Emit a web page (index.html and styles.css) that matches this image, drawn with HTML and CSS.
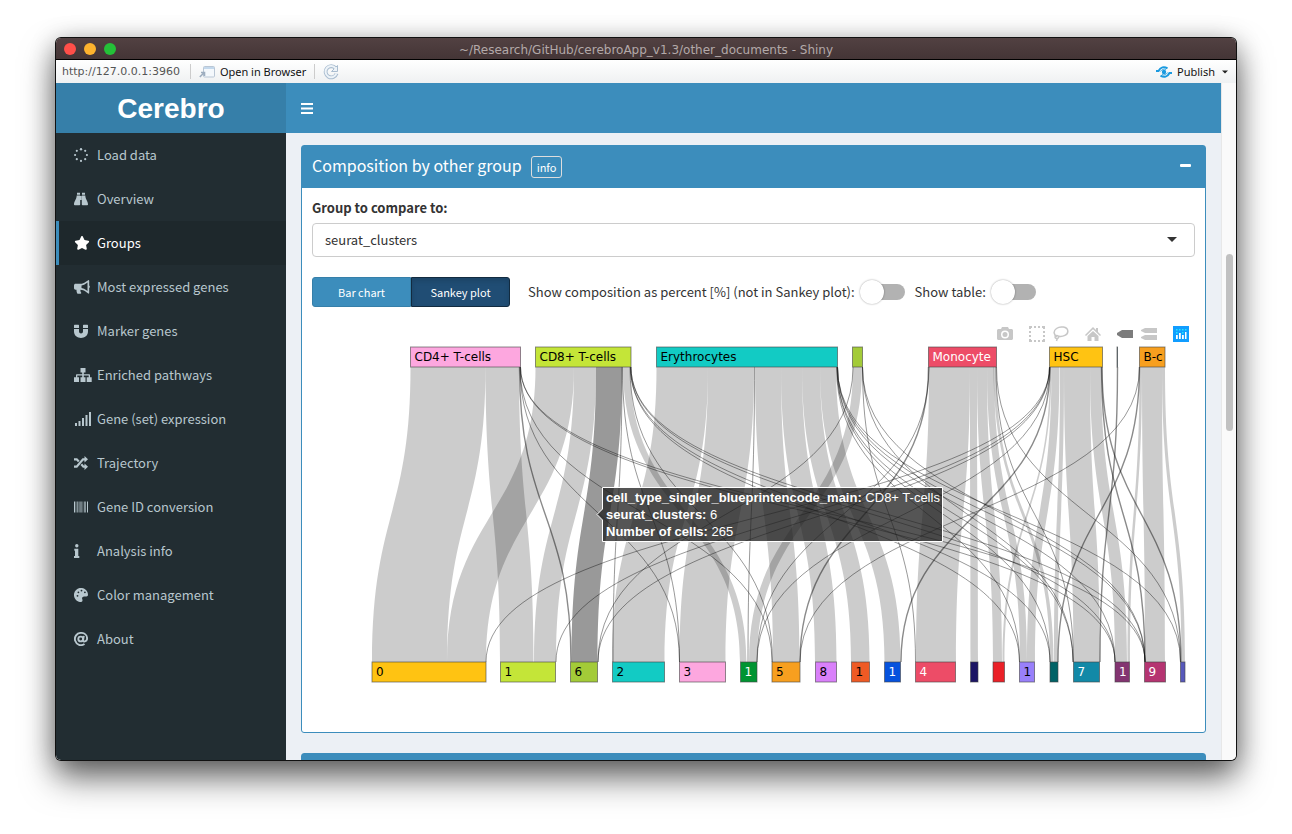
FILE: index.html
```html
<!DOCTYPE html>
<html lang="en">
<head>
<meta charset="utf-8">
<title>Cerebro</title>
<link rel="stylesheet" href="styles.css">
</head>
<body>
<div class="window">
  <div class="titlebar">
    <div class="lights"><span class="light red"></span><span class="light amber"></span><span class="light green"></span></div>
    <div class="window-title">~/Research/GitHub/cerebroApp_v1.3/other_documents - Shiny</div>
    <div></div>
  </div>
  <div class="toolbar">
    <span class="url">http://127.0.0.1:3960</span>
    <span class="sep"></span>
    <button class="tool open" type="button">
      <svg width="16" height="12" viewBox="0 0 16 12"><rect x="4.500" y=".5" width="11" height="10.500" rx="1" fill="#f4f8fc" stroke="#b9c6d5"/><path d="M5 1h10v2H5z" fill="#c3d8ec"/><path d="M.8 11 4.500 7.300M2 6.500h3.500V10" fill="none" stroke="#9dadbf" stroke-width="1.600"/></svg>
      Open in Browser</button>
    <span class="sep"></span>
    <button class="tool" type="button" aria-label="Reload">
      <svg width="16" height="16" viewBox="0 0 16 16"><path d="M12.600 4.300A5.600 5.600 0 1 0 13.600 9.500" fill="none" stroke="#a9bccf" stroke-width="3.800"/><path d="M14.500 1.500v6h-6z" fill="#edf3f8" stroke="#a9bccf"/><path d="M12.600 4.300A5.600 5.600 0 1 0 13.500 9.300" fill="none" stroke="#edf3f8" stroke-width="2"/></svg>
    </button>
    <button class="tool publish" type="button">
      <svg width="16" height="12" viewBox="0 0 16 12" fill="none" stroke="#1a9ae0" stroke-width="2"><circle cx="8" cy="6" r="2.200" fill="#1a9ae0" stroke="none"/><path d="M0 5h2.500C4.500 1 8 .2 11.500 2.300M16 7h-2.500c-2 4-5.500 4.800-9 2.700"/><path d="M4.500 5.500C5.500 3.500 8 2.500 10 3.500M11.500 6.500c-1 2-3.500 3-5.500 2" stroke-width=".8"/></svg>
      Publish
      <svg width="6" height="4" viewBox="0 0 6 4"><path d="M0 .5h6L3 3.500z" fill="#222"/></svg>
    </button>
  </div>
  <div class="viewport">
    <div class="app">
      <aside class="sidebar">
        <a class="logo" href="#">Cerebro</a>
        <nav class="menu">
          <a href="#"><svg viewBox="0 0 14 14"><circle cx="7" cy="1.200" r="1.200"/><circle cx="11.200" cy="2.800" r="1.100"/><circle cx="12.900" cy="7" r="1.100"/><circle cx="11.200" cy="11.200" r="1.100"/><circle cx="7" cy="12.900" r="1.100"/><circle cx="2.800" cy="11.200" r="1.100"/><circle cx="1.100" cy="7" r="1.100"/><circle cx="2.800" cy="2.800" r="1.100"/></svg>Load data</a>
          <a href="#"><svg viewBox="0 0 14 14"><path d="M3 .8h3v2H3zM8 .8h3v2H8zM2.700 3.400h3.500V12.500a.8.800 0 0 1-.8.800H.8a.8.800 0 0 1-.8-.8C0 9 2.500 7.500 2.700 3.400zM11.300 3.400H7.800v9.100c0 .4.400.8.800.8h4.600a.8.800 0 0 0 .8-.8c0-3.500-2.500-5-2.700-9.100zM6 4h2v4H6z"/></svg>Overview</a>
          <a class="active" href="#"><svg class="big" viewBox="0 0 16 14"><path d="M7.200.5c.3-.6 1.300-.6 1.600 0l1.700 3.600 3.900.6c.7.100 1 .9.500 1.500l-2.800 2.700.7 3.900c.1.700-.6 1.200-1.300.9L8 11.900l-3.500 1.800c-.7.300-1.400-.2-1.300-.9l.7-3.900L1.100 6.200c-.5-.6-.2-1.400.5-1.500l3.900-.6z"/></svg>Groups</a>
          <a href="#"><svg class="big" viewBox="0 0 16 14"><path fill-rule="evenodd" d="M15.200 5.500V.8c0-.6-.6-.9-1-.6L11.500 2C10 3.200 8.400 3.800 6.500 3.800H1.600C.7 3.800 0 4.500 0 5.400v2.700c0 .9.700 1.600 1.600 1.600h.9c-.1 1.400.2 2.600.8 3.700.1.300.4.400.7.400h2.500c.7 0 1-.7.600-1.200-.5-.7-.8-1.800-.6-2.900 1.900 0 3.600.7 5 1.800l2.700 2.100c.4.300 1 0 1-.6V8c.9-.5.900-2 0-2.500zM13.500 11 12.400 10.200A9.800 9.800 0 0 0 7.500 8V5.500a9.800 9.800 0 0 0 4.900-2.200l1.100-.8z"/></svg>Most expressed genes</a>
          <a href="#"><svg viewBox="0 0 14 14"><path d="M0 5h5v2.500c0 2.600 4 2.600 4 0V5h5v2.500C14 16 0 16 0 7.500zM.6.800h3.800c.4 0 .6.300.6.600V4H0V1.400C0 1.100.2.800.6.800zM9.600.8h3.800c.4 0 .6.300.6.600V4H9V1.400c0-.3.200-.6.600-.6z"/></svg>Marker genes</a>
          <a href="#"><svg class="wide" viewBox="0 0 18 14"><path d="M6.500 0h5v4.500h-1.700v1.800H15c.6 0 1 .4 1 1v1.900h1.700V14h-5V9.200h2V7.600H9.800v1.600h1.700V14h-5V9.200h1.700V7.600H3.300v1.600H5V14H0V9.200h2V7.300c0-.6.400-1 1-1h5.200V4.500H6.500z"/></svg>Enriched pathways</a>
          <a href="#"><svg class="wide" viewBox="0 0 18 14"><path d="M1 11h2v3H1zM4.500 9h2v5h-2zM8 6h2v8H8zM11.500 3h2v11h-2zM15 0h2v14h-2z"/></svg>Gene (set) expression</a>
          <a href="#"><svg viewBox="0 0 14 14"><path d="M0 3.300h2.700L4.800 5.600M0 10.700h2.700L9 3.300h3M7.300 8.300 9.400 10.700h2.600" fill="none" stroke="currentColor" stroke-width="2.200"/><path d="M10.500 0 14 3.300 10.500 6.600zM10.500 7.400l3.500 3.300-3.500 3.300z"/></svg>Trajectory</a>
          <a href="#"><svg viewBox="0 0 14 14"><path d="M0 1.500h1v11H0zM13 1.500h1v11h-1z"/><path opacity=".65" d="M1.500 1.500h1v11h-1zM3 1.500h1.500v11H3zM5 1.500h.7v11H5zM6.200 1.500h1.600v11H6.200zM8.500 1.500h.8v11h-.8zM10 1.500h2v11h-2z"/></svg>Gene ID conversion</a>
          <a href="#"><svg viewBox="0 0 14 14"><circle cx="2.800" cy="1.700" r="1.700"/><path d="M.3 4.800h4v7.200h1v2H0v-2h1V6.800H.3z"/></svg>Analysis info</a>
          <a href="#"><svg viewBox="0 0 14 14"><path fill-rule="evenodd" d="M5.600.1C2.900.7.700 2.900.1 5.600-.9 10.500 3.400 14.500 7.100 14c1.200-.2 1.800-1.600 1.200-2.700-.7-1.300.3-2.900 1.800-2.900h2.300c.9 0 1.600-.8 1.600-1.700C14 2.500 10.100-.8 5.600.1zM3.500 8.700a.9.900 0 1 1 0-1.800.9.900 0 0 1 0 1.800zM4.400 5.200a.9.900 0 1 1 0-1.800.9.900 0 0 1 0 1.800zM7.500 3.500a.9.900 0 1 1 0-1.800.9.900 0 0 1 0 1.800zM10.900 5.200a.9.900 0 1 1 0-1.800.9.900 0 0 1 0 1.800z"/></svg>Color management</a>
          <a href="#"><svg viewBox="0 0 14 14"><g fill="none" stroke="currentColor" stroke-width="1.900"><circle cx="6.700" cy="7" r="2.400"/><path d="M9.800 3.800 9 8.500c-.2 1.600 4.100 1.400 4.100-2C13.100 3.200 10.400.9 7 .9A6.100 6.100 0 1 0 10.500 12"/></g></svg>About</a>
        </nav>
      </aside>
      <div class="main">
        <header class="navbar"><button class="burger" type="button" aria-label="Toggle navigation"><svg width="12" height="11" viewBox="0 0 12 11"><path d="M0 0h12v2H0zM0 4.500h12v2H0zM0 9h12v2H0z" fill="#fff"/></svg></button></header>
        <main class="content">
          <section class="box">
            <header class="box-header">
              <h3>Composition by other group</h3>
              <button class="info" type="button">info</button>
              <button class="collapse" type="button" aria-label="Collapse"><svg width="11" height="3" viewBox="0 0 11 3"><rect width="11" height="3" rx="1" fill="#fff"/></svg></button>
            </header>
            <div class="box-body">
              <label class="field-label" for="group">Group to compare to:</label>
              <div class="select-wrap">
                <select id="group"><option>seurat_clusters</option></select>
                <svg class="caret" width="10" height="5" viewBox="0 0 10 5"><path d="M0 0h10L5 5z" fill="#333"/></svg>
              </div>
              <div class="controls">
                <div class="btn-group"><button type="button">Bar chart</button><button class="on" type="button">Sankey plot</button></div>
                <label class="switch" for="percent">Show composition as percent [%] (not in Sankey plot):<input id="percent" type="checkbox"></label>
                <label class="switch" for="table">Show table:<input id="table" type="checkbox"></label>
              </div>
              <div class="plot">
                <svg class="sankey" id="sankey" viewBox="312 322 883 400" role="img" aria-label="Sankey plot of cell types and clusters"></svg>
                <div class="modebar">
                  <svg width="16" height="16" viewBox="0 0 16 16"><path fill-rule="evenodd" d="M1.500 3H4l1-2h6l1 2h2.500c.8 0 1.500.7 1.500 1.500v8c0 .8-.7 1.500-1.500 1.500h-13C.7 14 0 13.300 0 12.500v-8C0 3.700.7 3 1.500 3zM8 4.500a4 4 0 1 0 0 8 4 4 0 0 0 0-8zM8 6a2.500 2.500 0 1 1 0 5 2.500 2.500 0 0 1 0-5z"/></svg>
                  <svg class="gap" width="16" height="16" viewBox="0 0 16 16"><path d="M0 0h3v2H2v1H0zM5 0h2v2H5zM9 0h2v2H9zM13 0h3v3h-2V2h-1zM0 5h2v2H0zM0 9h2v2H0zM14 5h2v2h-2zM14 9h2v2h-2zM0 13h2v1h1v2H0zM5 14h2v2H5zM9 14h2v2H9zM14 13h2v3h-3v-2h1z"/></svg>
                  <svg width="16" height="16" viewBox="0 0 16 16"><path d="M4 10.500C.5 9 0 5 3.500 2.500 7-.2 14.500.5 14.800 5c.3 4-5 6-9 5.300M5 12.300c-2.500 1-4-1.600-2-2.600 1.500-.7 3 .5 2.500 1.700-.4 1.100-1.500 1-2 3.600" fill="none" stroke="currentColor" stroke-width="1.500"/></svg>
                  <svg class="gap" width="16" height="16" viewBox="0 0 16 16"><path d="m8 1 3 3V2h2v4l3 3-1 1-7-6.700L1 10 0 9zM8 5l5.500 5v5H9.500v-4h-3v4h-4v-5z"/></svg>
                  <svg class="gap picked" width="16" height="16" viewBox="0 0 16 16"><path d="M5 4h11v8H5L0 9V7z"/></svg>
                  <svg width="16" height="16" viewBox="0 0 16 16"><path d="M4 2h12v5H4L0 5V4zM4 9h12v5H4L0 12v-1z"/></svg>
                  <svg class="gap" width="16" height="16" viewBox="0 0 16 16"><path d="M0 0h16v16H0z" fill="#119dff"/><path d="M3 9h1.800v4H3zM6 7h1.800v6H6zM9 9h1.800v4H9zM12 6h1.500v7H12z" fill="#fff"/><path d="M3 3h1.500v1.500H3zM6 3h1.500v1.500H6zM9 3h1.500v1.500H9zM12 3h1.500v1.500H12zM3 6h1.500v1.500H3zM9 6h1.500v1.500H9z" fill="#25fefd" opacity=".8"/></svg>
                </div>
              </div>
            </div>
          </section>
          <section class="box next"><header class="box-header"></header></section>
        </main>
      </div>
    </div>
    <div class="scrollbar"><div class="thumb"></div></div>
  </div>
</div>
<script src="sankey.js"></script>
</body>
</html>
```
FILE: styles.css
```css
* { box-sizing: border-box; }
body {
  margin: 0;
  height: 100vh;
  padding: 38px 56px 74px;
  background: #fff;
  color: #333;
  font: 13px/20px "Noto Sans CJK SC", "Noto Sans", sans-serif;
}
button { font: inherit; color: inherit; border: 0; background: none; padding: 0; }
a { color: inherit; text-decoration: none; }
svg { flex: none; }
.window {
  height: 100%;
  display: flex;
  flex-direction: column;
  overflow: hidden;
  border-radius: 5px;
  box-shadow: 0 0 0 1px #111, 0 18px 34px rgba(0, 0, 0, .55), 0 4px 26px rgba(0, 0, 0, .3);
}
.titlebar {
  flex: none;
  height: 22px;
  padding: 0 8px;
  display: grid;
  grid-template-columns: 1fr auto 1fr;
  align-items: center;
  background: linear-gradient(#524142, #443536);
  border-bottom: 1px solid #000;
  color: #b3a9a9;
  font: 12px/20px "DejaVu Sans", sans-serif;
}
.window-title { padding-top: 2px; }
.lights { display: flex; gap: 8px; }
.light { width: 12px; height: 12px; border-radius: 50%; }
.red { background: #ff4f49; }
.amber { background: #fdb32e; }
.green { background: #24c138; }
.toolbar {
  flex: none;
  height: 23px;
  padding: 0 8px 0 6px;
  display: flex;
  align-items: center;
  gap: 8px;
  background: linear-gradient(#fff, #eff1f2);
  color: #111;
  font: 11px/16px "Noto Sans", sans-serif;
}
.url { margin-right: 2px; color: #555; font-family: "DejaVu Sans", sans-serif; }
.sep { width: 1px; height: 15px; background: #ccc; }
.tool { display: flex; align-items: center; gap: 5px; }
.publish { margin-left: auto; }
.publish svg:last-child { margin-left: 2px; }
.viewport { flex: 1; min-height: 0; display: flex; }
.app { flex: 1; min-width: 0; display: flex; background: #ecf0f5; }
.sidebar { flex: none; width: 230px; background: #222d32; color: #b8c7ce; overflow: hidden; }
.logo {
  display: block;
  height: 50px;
  background: #367fa9;
  color: #fff;
  text-align: center;
  font: bold 28px/52px "Liberation Sans", Arial, sans-serif;
}
.menu a {
  display: flex;
  align-items: center;
  gap: 9px;
  height: 44px;
  padding-left: 15px;
  border-left: 3px solid transparent;
}
.menu svg { width: 14px; height: 14px; fill: currentColor; }
.menu .big { width: 16px; margin-right: -2px; }
.menu .wide { width: 18px; margin-right: -4px; }
.menu .active { background: #1e282c; border-color: #3c8dbc; color: #fff; }
.main { flex: 1; min-width: 0; overflow: hidden; }
.navbar { height: 50px; padding: 0 15px; display: flex; align-items: center; background: #3c8dbc; }
.burger { display: flex; }
.content { padding: 12px 15px; }
.box { margin-bottom: 20px; background: #fff; border: 1px solid #3c8dbc; border-radius: 3px; }
.box-header {
  min-height: 42px;
  padding: 0 14px 4px 10px;
  display: flex;
  align-items: center;
  gap: 9px;
  background: #3c8dbc;
  color: #fff;
}
.box-header h3 { margin: 0; font-size: 16px; line-height: 24px; font-weight: 400; }
.info { margin-top: 4px; padding: 0 5px; border: 1px solid #ddd; border-radius: 3px; font-size: 11px; line-height: 20px; }
.collapse { margin-left: auto; display: flex; }
.box-body { padding: 10px; }
.field-label { display: block; font-weight: 700; margin-bottom: 5px; }
.select-wrap { position: relative; }
.select-wrap select {
  display: block;
  width: 100%;
  height: 34px;
  padding: 0 12px;
  appearance: none;
  border: 1px solid #ccc;
  border-radius: 4px;
  background: #fff;
  color: #333;
  font: inherit;
}
.caret { position: absolute; right: 18px; top: 14px; pointer-events: none; }
.controls { display: flex; align-items: center; height: 30px; margin: 20px 0 15px; }
.btn-group { display: flex; margin-right: 18px; font-size: 11px; line-height: 28px; color: #fff; }
.btn-group button { width: 99px; border: 1px solid #367fa9; background: #3c8dbc; border-radius: 3px 0 0 3px; }
.btn-group .on { background: #204d74; border-color: #122b40; border-radius: 0 3px 3px 0; box-shadow: inset 0 3px 5px rgba(0, 0, 0, .125); }
.switch { display: flex; align-items: center; gap: 6px; margin-right: 10px; }
.switch input {
  appearance: none;
  position: relative;
  width: 44px;
  height: 16px;
  margin: 0;
  border-radius: 8px;
  background: #b2b2b2;
}
.switch input::before {
  content: "";
  position: absolute;
  left: -1px;
  top: -4px;
  width: 24px;
  height: 24px;
  border-radius: 50%;
  background: #fff;
  box-shadow: 0 0 2px rgba(0, 0, 0, .4);
}
.switch input:checked::before { left: 21px; }
.plot { position: relative; }
.sankey { display: block; width: 100%; height: auto; }
.modebar { position: absolute; top: 4px; right: 6px; display: flex; gap: 8px; color: #c7c7c7; }
.modebar svg { fill: currentColor; }
.modebar .gap { margin-left: 8px; }
.modebar .picked { color: #7c7c7c; }
.sankey .band { fill: #000; fill-opacity: .2; }
.sankey .band.hover { fill-opacity: .4; }
.sankey .line { fill: none; stroke: #000; stroke-opacity: .4; }
.sankey .line.double { stroke-width: 1.4; stroke-opacity: .46; }
.sankey .node { stroke: #444; stroke-opacity: .6; }
.sankey .label { font: 12px "DejaVu Sans", Verdana, sans-serif; }
.sankey .tip { fill: #1f1f1f; fill-opacity: .76; stroke: #fff; }
.sankey .tip-text { fill: #fff; font: 13px "Liberation Sans", Arial, sans-serif; }
.sankey .key { font-weight: 700; }
.next { margin-bottom: 0; }
.scrollbar { flex: none; width: 15px; padding: 171px 3px 0 4px; background: #fafafa; border-left: 1px solid #e8e8e8; }
.thumb { height: 177px; border-radius: 4px; background: #c1c1c1; }
```
FILE: sankey.js
```js
const TOP = 367, BOTTOM = 662, MID = (TOP + BOTTOM) / 2;

// [left, right, fill, label, label colour]
const cellTypes = [
  [410.5, 520.5, "#fda7df", "CD4+ T-cells"],
  [535.5, 631, "#c4e538", "CD8+ T-cells"],
  [656.5, 837.5, "#12cbc4", "Erythrocytes"],
  [852.5, 862.5, "#a3cb38", ""],
  [928.5, 996.5, "#ed4c67", "Monocyte", "#fff"],
  [1049.5, 1102.5, "#ffc312", "HSC"],
  [1117, 1117.5, "#0c3040", ""],
  [1139.5, 1165, "#f79f1f", "B-c"]
];
const clusters = [
  [372, 486, "#ffc312", "0"], [500.5, 555.5, "#c4e538", "1"],
  [570.5, 597.5, "#a3cb38", "6"], [612.5, 664.5, "#12cbc4", "2"],
  [679.5, 725.5, "#fda7df", "3"], [740.5, 757, "#009432", "1", "#fff"],
  [772, 800, "#f79f1f", "5"], [815.5, 836.5, "#d980fa", "8"],
  [851.5, 869.5, "#ee5a24", "1"], [884.5, 900.5, "#0652dd", "1", "#fff"],
  [915.5, 955.5, "#ed4c67", "4", "#fff"], [970.5, 978, "#1b1464", ""],
  [993, 1004.5, "#ea2027", ""], [1019.5, 1034.5, "#9980fa", "1"],
  [1050, 1058, "#006266", ""], [1073.5, 1099.5, "#1289a7", "7", "#fff"],
  [1115, 1129.5, "#833471", "1", "#fff"], [1144.5, 1165.5, "#b53471", "9", "#fff"],
  [1180.5, 1185, "#5758bb", ""]
];
// [top left, top right, bottom left, bottom right]
const bands = [
  [410.5, 485.5, 372, 447], [485.5, 519, 500, 533.5],
  [535.5, 574, 447, 486], [574, 596, 534, 556], [596, 622, 571.5, 597.5], [623, 630, 740, 746.5],
  [656.5, 708, 612, 664.5], [708, 754, 679.5, 725.5], [755, 781, 773, 799.5],
  [781, 802, 815, 836.5], [802, 820, 851, 869.5], [820, 836, 884.5, 900.5],
  [853, 862, 749, 757],
  [929, 970, 916, 956], [970, 977, 970.5, 978], [977, 987, 993, 1002],
  [987, 994, 1020, 1027], [993.5, 996, 1050, 1053.5],
  [1050, 1051.5, 1002.5, 1004.5], [1051.5, 1059.5, 1027, 1035], [1060, 1064, 1054, 1058],
  [1064, 1090, 1073.5, 1100], [1090, 1101, 1115, 1127],
  [1139.5, 1142, 1127.5, 1130], [1142, 1162, 1145, 1165], [1162, 1165, 1181.5, 1185]
];
// [top, bottom, 2 when two links coincide]
const lines = [
  [519.5, 571, 2], [520, 679.5], [520, 772], [520.5, 1115], [520.5, 1145],
  [622, 613], [622.5, 679.5], [630, 772.5], [630.5, 1019.5], [630.5, 1050], [631, 1115], [631, 1145],
  [754.5, 748],
  [836.5, 1019.5], [837, 1050], [837, 1073], [837.5, 1115], [837.5, 1145], [837.5, 1180.5],
  [853, 598], [862.5, 915.5], [862.5, 1073], [862.5, 1145],
  [929, 757], [928.5, 800, 2], [996, 1073.5], [996.5, 1180.5],
  [1049.5, 486], [1049.5, 556], [1049.5, 598], [1050, 757], [1050, 901, 2],
  [1101.5, 1145, 2], [1102, 1181, 2],
  [1117.5, 1100, 2], [1139.5, 800], [1139.5, 1058, 2]
];
const curve = (a, b) => `C${a},${MID} ${b},${MID} ${b},`;
let out = "";
for (const [a, b, c, d] of bands) {
  const hover = a === 596 ? " hover" : "";
  out += `<path class="band${hover}" d="M${a},${TOP}${curve(a, c)}${BOTTOM}H${d}${curve(d, b)}${TOP}Z"/>`;
}
for (const [a, b, n] of lines) {
  out += `<path class="line${n ? " double" : ""}" d="M${a},${TOP}${curve(a, b)}${BOTTOM}"/>`;
}
const drawNodes = (nodes, y) => {
  for (const [a, b, fill, label, ink] of nodes) {
    out += `<rect class="node" x="${a}" y="${y}" width="${b - a}" height="20" fill="${fill}"/>`;
    if (label) out += `<text class="label" x="${a + 4}" y="${y + 14}" fill="${ink || "#000"}">${label}</text>`;
  }
};
drawNodes(cellTypes, 347);
drawNodes(clusters, 662);
out += `<path class="tip" d="M602.5,487.5H942.5V541.5H602.5V520L597,514.5L602.5,509Z"/>
<text class="tip-text">
<tspan x="606" y="502" class="key">cell_type_singler_blueprintencode_main:</tspan><tspan> CD8+ T-cells</tspan>
<tspan x="606" y="519" class="key">seurat_clusters:</tspan><tspan> 6</tspan>
<tspan x="606" y="536" class="key">Number of cells:</tspan><tspan> 265</tspan></text>`;
document.getElementById("sankey").innerHTML = out;
```
